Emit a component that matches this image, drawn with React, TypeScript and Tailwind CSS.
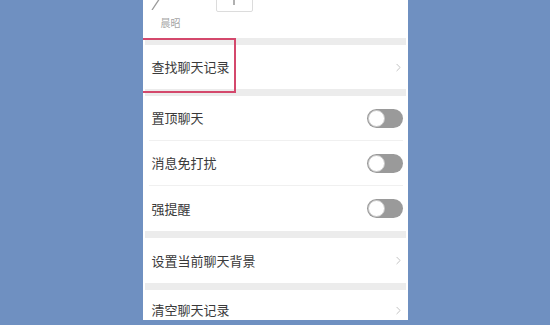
import { ChevronRight } from 'lucide-react'

const font = { fontFamily: '"Noto Sans CJK SC", "Noto Sans", sans-serif' }

function Band() {
  return <div className="mx-[2px] h-[7px] bg-[#ececec]" />
}

function LinkRow({ label, h = 'h-[45px]' }: { label: string; h?: string }) {
  return (
    <div className={`flex ${h} items-center justify-between pl-[9px] pr-[3px]`}>
      <span className="text-[13px] text-[#3a3a3a]">{label}</span>
      <ChevronRight className="size-[13px] text-[#b5b5b5]" strokeWidth={1.5} />
    </div>
  )
}

function Toggle() {
  return (
    <div className="relative h-[19px] w-[36px] rounded-full bg-[#9a9a9a]">
      <div className="absolute left-[1px] top-[1px] size-[17px] rounded-full border border-[#c8c8c8] bg-white" />
    </div>
  )
}

function ToggleRow({ label, divider }: { label: string; divider?: boolean }) {
  return (
    <div className={`ml-[6px] mr-[5px] flex h-[45px] items-center justify-between pl-[3px] ${divider ? 'border-b border-[#f0f0f0]' : ''}`}>
      <span className="text-[13px] text-[#3a3a3a]">{label}</span>
      <Toggle />
    </div>
  )
}

export default function App() {
  return (
    <div className="flex h-[325px] w-[550px] justify-center bg-[#6f90c1]" style={font}>
      <div className="relative h-[320px] w-[265px] overflow-hidden bg-white">
        {/* cropped member area */}
        <div className="h-[38px] overflow-hidden">
          <div className="-mt-[26px] flex gap-[30px] pl-[7px]">
            <div className="flex flex-col">
              <svg width="36" height="36" viewBox="0 0 36 36">
                <path d="M2 36 L10 24" stroke="#9a9a9a" strokeWidth="1.3" />
              </svg>
              <span className="mt-[6px] pl-[11px] text-[10px] leading-[14px] text-[#a5a5a5]">晨昭</span>
            </div>
            <div className="flex h-[38px] w-[37px] items-end justify-center rounded-[2px] border border-[#dcdcdc]">
              <div className="mb-[6px] h-[8px] w-[2px] bg-[#b0b0b0]" />
            </div>
          </div>
        </div>
        <Band />
        <LinkRow label="查找聊天记录" h="h-[44px]" />
        <Band />
        <ToggleRow label="置顶聊天" divider />
        <ToggleRow label="消息免打扰" divider />
        <ToggleRow label="强提醒" />
        <Band />
        <LinkRow label="设置当前聊天背景" />
        <Band />
        <LinkRow label="清空聊天记录" h="h-[40px]" />

        {/* red highlight annotation */}
        <div className="absolute left-0 top-[38px] h-[55px] w-[93px] border-2 border-l-0 border-[#d4486c]" />
      </div>
    </div>
  )
}
